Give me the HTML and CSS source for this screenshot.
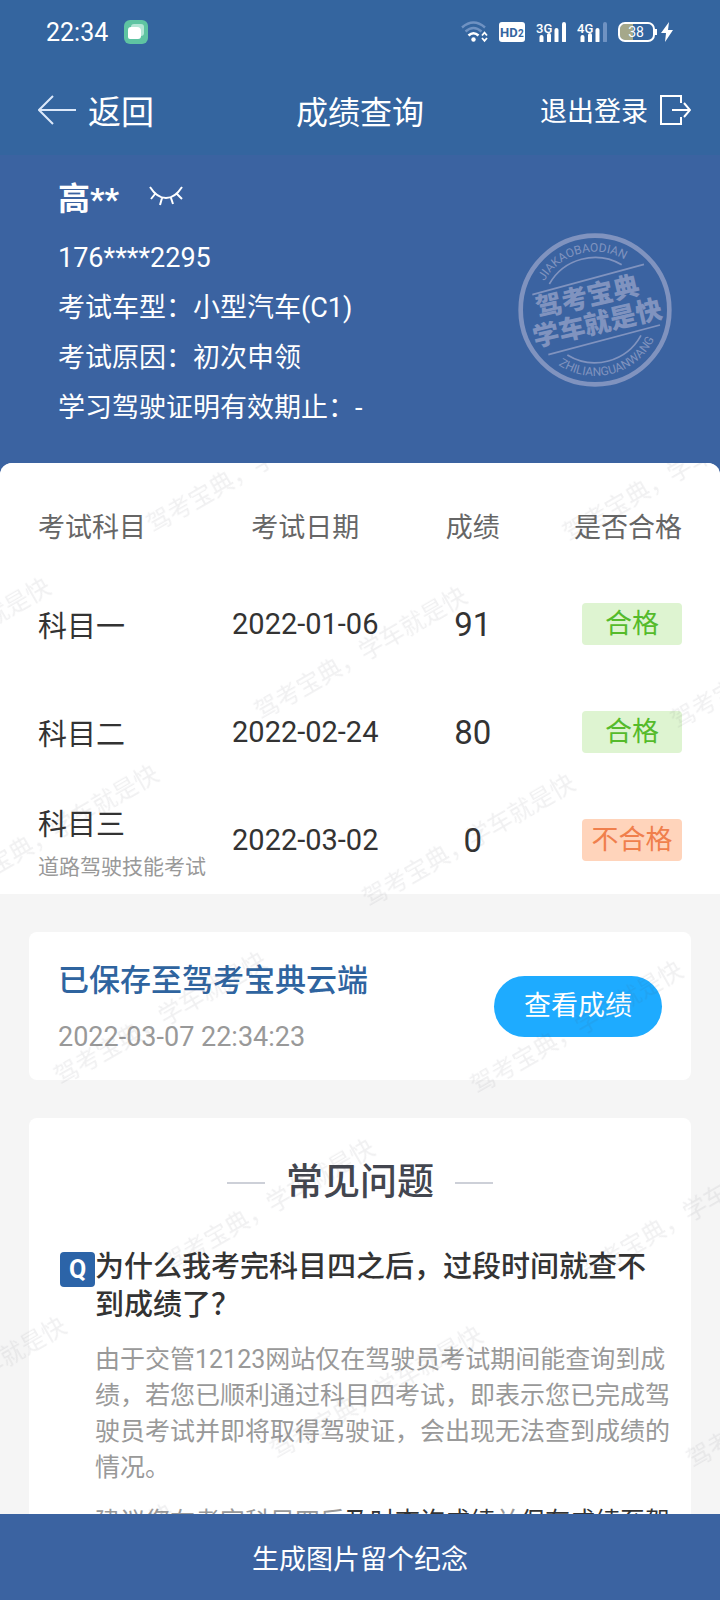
FILE: index.html
```html
<!DOCTYPE html>
<html lang="zh-CN">
<head>
    <meta charset="UTF-8">
    <meta name="viewport" content="width=device-width, initial-scale=1.0">
    <title>成绩查询</title>
    <link rel="stylesheet" href="styles.css">
</head>
<body>
    <div class="app">
        <header class="top">
            <div class="status-bar">
                <div class="status-left">
                    <span class="clock">22:34</span>
                    <svg width="24" height="24" viewBox="0 0 24 24">
                        <rect width="24" height="24" rx="6" fill="#5fc4a2"/>
                        <rect x="7" y="4" width="13" height="12" rx="3" fill="#b4e6d5"/>
                        <path d="M7 7h6q4 0 4 4v5q0 3-3 3H6q-2 0-2-2v-7q0-3 3-3z" fill="#fff"/>
                    </svg>
                </div>
                <div class="status-right">
                    <svg width="27" height="22" viewBox="0 0 27 22" fill="none">
                        <g stroke="#6f92c2" stroke-width="2.4">
                            <path d="M1 6.500Q12.500-3.500 24 6.500"/>
                            <path d="M4.500 10.500Q12.500 3.500 20.500 10.500"/>
                        </g>
                        <path d="M7.500 14.500Q12.500 10 17.500 14.500" stroke="#fff" stroke-width="2.600"/>
                        <circle cx="12.500" cy="18.500" r="2.200" fill="#fff"/>
                        <path d="M21 14.500l2.500-2.800 2.500 2.800M21 17l2.500 2.800 2.500-2.800" stroke="#fff" stroke-width="1.800"/>
                    </svg>
                    <svg width="26" height="20" viewBox="0 0 26 20">
                        <rect width="26" height="20" rx="3" fill="#fff"/>
                        <text x="1" y="15" class="hd">HD</text>
                        <text x="19" y="15" class="hd-sub">2</text>
                    </svg>
                    <svg width="30" height="20" viewBox="0 0 30 20">
                        <text x="0" y="11" class="net">3G</text>
                        <path d="M5.500 15v4M13 13v6M20.500 8v11M28 2v17" class="bars"/>
                    </svg>
                    <svg width="30" height="20" viewBox="0 0 30 20">
                        <text x="0" y="11" class="net">4G</text>
                        <path d="M5.500 15v4M13 13v6M20.500 8v11" class="bars"/>
                        <path d="M28 2v17" class="bars dim"/>
                    </svg>
                    <svg width="56" height="20" viewBox="0 0 56 20">
                        <path d="M7 2h8v16H7q-5 0-5-5V7q0-5 5-5z" fill="#a5a88a"/>
                        <rect x="1" y="1" width="35" height="18" rx="6" fill="none" stroke="#fff" stroke-width="2"/>
                        <path d="M38 7v6" stroke="#fff" stroke-width="2"/>
                        <text x="18" y="15" class="level">38</text>
                        <path d="M51 0L43 11h5l-1 9 8-12h-5z" fill="#fff"/>
                    </svg>
                </div>
            </div>
            <nav class="nav">
                <button class="nav-btn back" type="button">
                    <svg width="38" height="30" viewBox="0 0 38 30" fill="none" stroke="#dbe8fa" stroke-width="2">
                        <path d="M38 15H2M15 1L1 15l14 14"/>
                    </svg>
                    返回
                </button>
                <h1 class="nav-title">成绩查询</h1>
                <button class="nav-btn logout" type="button">
                    退出登录
                    <svg width="31" height="30" viewBox="0 0 31 30" fill="none" stroke="#fff" stroke-width="2">
                        <path d="M21 8V1H1v28h20v-7M12 15h17M24 8l6 7-6 7"/>
                    </svg>
                </button>
            </nav>
        </header>

        <main class="page">
            <section class="profile">
                <div class="info">
                    <div class="name-row">
                        <h2 class="name">高**</h2>
                        <button class="eye" type="button" aria-label="显示姓名">
                            <svg width="34" height="20" viewBox="0 0 34 20" fill="none" stroke="#fff" stroke-width="2">
                                <path d="M1 1q7 11 16 11T33 1M6 8l-4 5M13 12l-2 7M22 12l2 6M28 8l5 5"/>
                            </svg>
                        </button>
                    </div>
                    <p>176****2295</p>
                    <p>考试车型：小型汽车(C1)</p>
                    <p>考试原因：初次申领</p>
                    <p>学习驾驶证明有效期止：-</p>
                </div>
                <svg class="stamp" width="154" height="154" viewBox="114 69 462 462" aria-hidden="true">
                    <defs>
                        <path id="arc-top" d="M170 300A175 175 0 0 1 520 300"/>
                        <path id="arc-bottom" d="M147 300A198 198 0 0 0 543 300"/>
                    </defs>
                    <circle cx="345" cy="300" r="223" class="ring"/>
                    <path class="thin" d="M208 222A158 158 0 0 1 425 164M262 435A158 158 0 0 0 483 376M157 254L492 163M205 434L540 345"/>
                    <text class="around" transform="rotate(-15 345 300)"><textPath href="#arc-top" startOffset="50%">JIAKAOBAODIAN</textPath></text>
                    <text class="around" transform="rotate(-15 345 300)"><textPath href="#arc-bottom" startOffset="50%">ZHILIANGUANWANG</textPath></text>
                    <g class="slogan" transform="rotate(-13 345 300)">
                        <text x="332" y="284">驾考宝典</text>
                        <text x="343" y="368">学车就是快</text>
                    </g>
                </svg>
            </section>

            <div class="content">
                <section class="results">
                    <table>
                        <thead>
                            <tr>
                                <th class="col-subject">考试科目</th>
                                <th class="col-date">考试日期</th>
                                <th class="col-score">成绩</th>
                                <th class="col-result">是否合格</th>
                            </tr>
                        </thead>
                        <tbody>
                            <tr>
                                <td class="col-subject">科目一</td>
                                <td class="col-date">2022-01-06</td>
                                <td class="col-score">91</td>
                                <td class="col-result"><span class="tag pass">合格</span></td>
                            </tr>
                            <tr>
                                <td class="col-subject">科目二</td>
                                <td class="col-date">2022-02-24</td>
                                <td class="col-score">80</td>
                                <td class="col-result"><span class="tag pass">合格</span></td>
                            </tr>
                            <tr>
                                <td class="col-subject">科目三<small>道路驾驶技能考试</small></td>
                                <td class="col-date">2022-03-02</td>
                                <td class="col-score">0</td>
                                <td class="col-result"><span class="tag fail">不合格</span></td>
                            </tr>
                        </tbody>
                    </table>
                </section>

                <section class="card saved">
                    <div class="saved-text">
                        <h2 class="saved-title">已保存至驾考宝典云端</h2>
                        <p class="saved-time">2022-03-07 22:34:23</p>
                    </div>
                    <button class="view-btn" type="button">查看成绩</button>
                </section>

                <section class="card faq">
                    <h2 class="faq-title">常见问题</h2>
                    <div class="faq-item">
                        <span class="q">Q</span>
                        <div class="faq-text">
                            <h3>为什么我考完科目四之后，过段时间就查不到成绩了？</h3>
                            <p>由于交管12123网站仅在驾驶员考试期间能查询到成绩，若您已顺利通过科目四考试，即表示您已完成驾驶员考试并即将取得驾驶证，会出现无法查到成绩的情况。</p>
                            <p>建议您在考完科目四后<b>及时查询成绩</b>并<b>保存成绩至驾考宝典云端</b>。</p>
                        </div>
                    </div>
                </section>

                <!-- watermark over the whole content area -->
                <svg class="watermark" aria-hidden="true">
                    <defs>
                        <pattern id="wm" width="356" height="216" patternUnits="userSpaceOnUse" patternTransform="translate(159 201) rotate(-30)">
                            <text x="60" y="100">驾考宝典，学车就是快</text>
                        </pattern>
                    </defs>
                    <rect width="100%" height="100%" fill="url(#wm)"/>
                </svg>
            </div>
        </main>

        <button class="bottom-btn" type="button">生成图片留个纪念</button>
    </div>
</body>
</html>
```

FILE: styles.css
```css
* {
    box-sizing: border-box;
    margin: 0;
    padding: 0;
}
body {
    font-family: Roboto, "Noto Sans CJK SC", sans-serif;
    font-size: 27px;
    color: #333;
    background-color: #f5f5f5;
}
button {
    font: inherit;
    color: inherit;
    background: none;
    border: none;
    cursor: pointer;
}
.app {
    display: flex;
    flex-direction: column;
    height: 100vh;
}

/* header */
.top {
    background-color: #34659f;
    color: #fff;
}
.status-bar {
    display: flex;
    justify-content: space-between;
    align-items: center;
    height: 64px;
    padding: 0 46px;
}
.status-left {
    display: flex;
    align-items: center;
    gap: 16px;
}
.status-right {
    display: flex;
    align-items: center;
    gap: 11px;
}
.clock {
    font-size: 25px;
}
.hd {
    font-size: 13px;
    font-weight: 700;
    fill: #34659f;
}
.hd-sub {
    font-size: 10px;
    font-weight: 700;
    fill: #34659f;
}
.net {
    font-size: 13px;
    font-weight: 500;
    fill: #fff;
}
.bars {
    stroke: #fff;
    stroke-width: 4;
    stroke-linecap: round;
}
.dim {
    stroke: #6f92c2;
}
.level {
    font-size: 14px;
    fill: #fff;
    text-anchor: middle;
}
.nav {
    display: grid;
    grid-template-columns: 1fr auto 1fr;
    align-items: center;
    height: 91px;
    padding: 0 29px;
}
.nav-btn {
    display: flex;
    align-items: center;
}
.back {
    gap: 12px;
    margin-left: 9px;
    font-size: 33px;
}
.nav-title {
    font-size: 32px;
    font-weight: 400;
}
.logout {
    justify-self: end;
    gap: 12px;
}

/* profile */
.page {
    flex: 1;
    min-height: 0;
    overflow-y: auto;
    scrollbar-width: none;
    background: linear-gradient(#3b63a1 400px, #f5f5f5 400px);
}
.profile {
    display: flex;
    justify-content: space-between;
    align-items: center;
    padding: 8px 48px 30px 58px;
    color: #fff;
}
.info p {
    line-height: 50px;
}
.name-row {
    display: flex;
    align-items: center;
    gap: 30px;
    height: 66px;
    margin-bottom: 4px;
}
.name {
    font-size: 32px;
    font-weight: 700;
}
.eye {
    display: flex;
}
.stamp {
    margin-top: 24px;
}
.ring {
    fill: none;
    stroke: #8093bf;
    stroke-width: 14;
}
.thin {
    fill: none;
    stroke: #8093bf;
    stroke-width: 5;
}
.around {
    font-size: 36px;
    fill: #8093bf;
    text-anchor: middle;
}
.slogan {
    font-size: 79px;
    font-weight: 900;
    fill: #8093bf;
    text-anchor: middle;
}

/* results */
.content {
    position: relative;
    overflow: hidden;
    padding-bottom: 38px;
    border-radius: 12px 12px 0 0;
    background-color: #f5f5f5;
}
.watermark {
    position: absolute;
    top: 0;
    left: 0;
    width: 100%;
    height: 100%;
    pointer-events: none;
    font-size: 24px;
    fill: rgba(60, 70, 80, 0.08);
}
.results {
    padding: 0 38px;
    background-color: #fff;
}
table {
    width: 100%;
    table-layout: fixed;
    border-collapse: collapse;
}
th {
    height: 107px;
    padding-top: 18px;
    font-weight: 400;
    color: #666;
    white-space: nowrap;
}
td {
    height: 108px;
    white-space: nowrap;
    font-size: 29px;
}
.col-subject {
    width: 30%;
    text-align: left;
}
.col-date {
    width: 23%;
    text-align: center;
}
.col-score {
    width: 29%;
    text-align: center;
}
.col-result {
    width: 18%;
    text-align: right;
}
td.col-score {
    font-size: 33px;
}
td small {
    display: block;
    margin-top: 7px;
    font-size: 21px;
    color: #999;
}
.tag {
    display: inline-block;
    width: 100px;
    border-radius: 4px;
    font-size: 27px;
    line-height: 42px;
    text-align: center;
    vertical-align: middle;
}
.pass {
    color: #55bb2b;
    background-color: #def4d1;
}
.fail {
    color: #f07f4c;
    background-color: #ffd4bb;
}

/* cards */
.card {
    margin: 38px 29px 0;
    border-radius: 8px;
    background-color: #fff;
}
.saved {
    display: flex;
    justify-content: space-between;
    align-items: center;
    padding: 0 29px;
}
.saved-text {
    padding: 20px 0 14px;
}
.saved-title {
    font-size: 31px;
    font-weight: 500;
    line-height: 57px;
    color: #2f649f;
}
.saved-time {
    line-height: 57px;
    color: #999;
}
.view-btn {
    padding: 0 30px;
    border-radius: 31px;
    line-height: 61px;
    color: #fff;
    background-color: #1eabff;
}
.faq {
    padding: 38px 18px 38px 31px;
}
.faq-title {
    display: flex;
    justify-content: center;
    align-items: center;
    gap: 21px;
    margin-right: 13px;
    font-size: 37px;
    font-weight: 500;
    line-height: 54px;
    color: #43464f;
}
.faq-title::before,
.faq-title::after {
    content: "";
    width: 38px;
    height: 2px;
    background-color: #cdd0d8;
}
.faq-item {
    display: flex;
    align-items: flex-start;
    margin-top: 38px;
}
.q {
    flex: none;
    width: 35px;
    margin-top: 4px;
    border-radius: 4px;
    font-size: 25px;
    font-weight: 700;
    line-height: 35px;
    text-align: center;
    color: #fff;
    background-color: #2c64a8;
}
.faq-text h3 {
    font-size: 29px;
    font-weight: 500;
    line-height: 38px;
}
.faq-text p {
    margin-top: 18px;
    font-size: 25px;
    line-height: 36px;
    color: #999;
}
.faq-text b {
    font-weight: 400;
    color: #333;
}

/* bottom bar */
.bottom-btn {
    flex: none;
    height: 86px;
    color: #fff;
    background-color: #3b63a1;
}
```
